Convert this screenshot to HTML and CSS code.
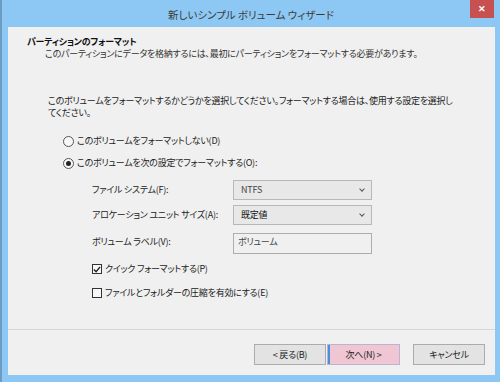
FILE: index.html
```html
<!doctype html>
<html>
<head>
<meta charset="utf-8">
<title>新しいシンプル ボリューム ウィザード</title>
<link rel="stylesheet" href="styles.css">
</head>
<body>
<div class="window">
	<div class="titlebar">
		<span class="title">新しいシンプル ボリューム ウィザード</span>
		<span class="close">✕</span>
	</div>
	<div class="client">
		<div class="header">
			<h1>パーティションのフォーマット</h1>
			<p>このパーティションにデータを格納するには、最初にパーティションをフォーマットする必要があります。</p>
		</div>
		<div class="content">
			<p class="intro">このボリュームをフォーマットするかどうかを選択してください。フォーマットする場合は、使用する設定を選択してください。</p>
			<div class="option"><span class="radio"></span>このボリュームをフォーマットしない(D)</div>
			<div class="option second"><span class="radio on"></span>このボリュームを次の設定でフォーマットする(O):</div>
			<div class="fields">
				<span class="lbl">ファイル システム(F):</span>
				<span class="select">NTFS<i class="arrow"></i></span>
				<span class="lbl">アロケーション ユニット サイズ(A):</span>
				<span class="select row2">既定値<i class="arrow"></i></span>
				<span class="lbl">ボリューム ラベル(V):</span>
				<span class="input">ボリューム</span>
			</div>
			<div class="check"><span class="box on"><svg width="9" height="9" viewBox="0 0 9 9"><path d="M1 4.5 L3.5 7 L8 1.5" fill="none" stroke="#222" stroke-width="1.6"/></svg></span>クイック フォーマットする(P)</div>
			<div class="check second"><span class="box"></span>ファイルとフォルダーの圧縮を有効にする(E)</div>
		</div>
		<div class="footer">
			<span class="btn">&lt; 戻る(B)</span>
			<span class="btn next">次へ(N) &gt;</span>
			<span class="btn cancel">キャンセル</span>
		</div>
	</div>
</div>
</body>
</html>
```

FILE: styles.css
```css
*{ margin:0; padding:0; box-sizing:border-box;}
html,body{ width:500px; height:382px; overflow:hidden;}
body{
	font-family:"Noto Sans CJK JP","Noto Sans",sans-serif;
	font-feature-settings:"palt";
	font-size:9px;
	letter-spacing:-0.25px;
	line-height:12px;
	color:#222;
}
.window{
	width:500px; height:382px;
	background:#8cc8f3;
	border-left:2px solid #6f9cc4;
	display:flex; flex-direction:column;
}
.titlebar{ height:27px; display:flex; align-items:flex-start;}
.title{
	flex:1;
	padding-left:30px;
	text-align:center;
	font-size:10.5px;
	letter-spacing:0;
	line-height:30px;
	color:#3c3c3c;
}
.close{
	width:24px; height:18px;
	margin-right:6px;
	background:#c75050;
	color:#fff;
	font-size:9px;
	font-weight:bold;
	line-height:18px;
	text-align:center;
}
.client{
	flex:1;
	margin:0 5px 7px 6px;
	background:#f0f0f0;
	display:flex; flex-direction:column;
}
.header{ padding:9px 0 0 19px;}
.header h1{ font-size:9px; font-weight:bold; color:#111;}
.header p{ padding-left:18px; color:#333;}
.content{ padding:35px 0 0 40px;}
.intro{ width:412px;}
.option{ display:flex; align-items:center; height:14px; margin:15px 0 0 15px;}
.option.second{ margin-top:8px;}
.radio{
	width:11px; height:11px;
	border:1px solid #555;
	border-radius:50%;
	background:#f8f8f8;
	margin-right:3px;
	display:flex; align-items:center; justify-content:center;
}
.radio.on:after{ content:""; width:5px; height:5px; border-radius:50%; background:#222;}
.fields{
	display:grid;
	grid-template-columns:141px 139px;
	margin:10px 0 0 44px;
	row-gap:5px;
	align-items:center;
	white-space:nowrap;
}
.select{
	position:relative;
	height:20px;
	border:1px solid #b8b8b8;
	background:#e8e8e8;
	padding-left:7px;
	line-height:18px;
	color:#444;
}
.select.row2{ color:#111;}
.arrow{
	position:absolute; right:7px; top:6px;
	width:4px; height:4px;
	border-right:1.5px solid #555; border-bottom:1.5px solid #555;
	transform:rotate(45deg);
}
.input{
	height:21px;
	margin-top:3px;
	border:1px solid #adadad;
	background:#f0f0f0;
	padding:2px 0 0 4px;
	line-height:12px;
	color:#444;
}
.check{ display:flex; align-items:center; height:14px; margin:8px 0 0 44px;}
.check.second{ margin-top:10px;}
.box{
	width:10px; height:10px;
	border:1px solid #333;
	background:#f8f8f8;
	margin-right:3px;
	display:flex; align-items:center; justify-content:center;
}
.footer{
	margin-top:auto;
	border-top:1px solid #d6d6d6;
	padding:14px 0 10px 246px;
	display:flex;
}
.btn{
	width:72px; height:21px;
	border:1px solid #acacac;
	background:#e3e3e3;
	text-align:center;
	line-height:19px;
}
.btn.next{
	width:73px;
	margin-left:1px;
	background:#efc6d2;
	border-color:#b8b4d8;
	box-shadow:inset 2px 0 0 #4b8fd8;
}
.btn.cancel{ margin-left:13px;}
```
